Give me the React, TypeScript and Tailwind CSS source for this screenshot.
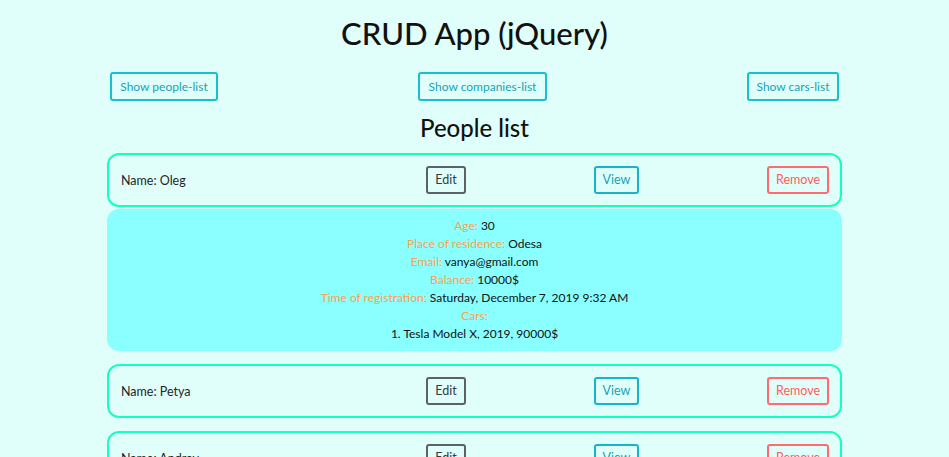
import { useState } from "react";

type Person = {
	id: number;
	name: string;
	age: number;
	city: string;
	email: string;
	balance: string;
	registered: string;
	cars: string[];
};

const people: Person[] = [
	{
		id: 1,
		name: "Oleg",
		age: 30,
		city: "Odesa",
		email: "vanya@gmail.com",
		balance: "10000$",
		registered: "Saturday, December 7, 2019 9:32 AM",
		cars: ["Tesla Model X, 2019, 90000$"],
	},
	{
		id: 2,
		name: "Petya",
		age: 25,
		city: "Kyiv",
		email: "petya@gmail.com",
		balance: "5000$",
		registered: "Sunday, December 8, 2019 10:15 AM",
		cars: [],
	},
	{
		id: 3,
		name: "Andrey",
		age: 41,
		city: "Lviv",
		email: "andrey@gmail.com",
		balance: "2000$",
		registered: "Monday, December 9, 2019 1:05 PM",
		cars: [],
	},
];

function Field({ label, children }: { label: string; children: React.ReactNode }) {
	return (
		<p className="leading-[18px]">
			<span className="text-[#ffa04d]">{label}:</span> {children}
		</p>
	);
}

function PersonRow({ person, open }: { person: Person; open: boolean }) {
	return (
		<div>
			<div className="h-[54px] border-2 border-[#14ffc0] rounded-[12px] flex items-center justify-between pl-[12px] pr-[11px] text-[12.5px]">
				<div className="w-[177px] pt-[2px] text-[#212529]">Name: {person.name}</div>
				<button className="h-[28px] w-[40px] pt-[1px] border-2 border-[#5a6268] rounded-[3px] text-[#343a40]">Edit</button>
				<button className="h-[28px] w-[45px] pt-[1px] border-2 border-[#17b3c8] rounded-[3px] text-[#17a2b8]">View</button>
				<button className="h-[28px] w-[62px] pt-[1px] border-2 border-[#ff6b70] rounded-[3px] text-[#ff5c5c]">Remove</button>
			</div>
			{open && (
				<div className="mt-[2px] bg-[#8affff] rounded-[12px] pt-[8px] pb-[8px] text-center text-[12px] text-[#111]">
					<Field label="Age">{person.age}</Field>
					<Field label="Place of residence">{person.city}</Field>
					<Field label="Email">{person.email}</Field>
					<Field label="Balance">{person.balance}</Field>
					<Field label="Time of registration">{person.registered}</Field>
					<p className="leading-[18px] text-[#ffa04d]">Cars:</p>
					{person.cars.map((car, i) => (
						<p key={car} className="leading-[18px]">
							{i + 1}. {car}
						</p>
					))}
				</div>
			)}
		</div>
	);
}

export default function App() {
	const [openId] = useState(1);
	return (
		<div className="min-h-screen bg-[#e0fffa] font-['Lato',sans-serif] text-[#111]">
			<div className="w-[735px] mx-auto">
				<h1 className="text-[31px] text-center pt-[12px] leading-[42px] font-medium">CRUD App (jQuery)</h1>
				<div className="mt-[18px] flex justify-between px-[3px] text-[12px]">
					<button className="h-[29px] w-[108px] pt-[1px] border-2 border-[#17bfd0] rounded-[3px] text-[#17a2b8]">Show people-list</button>
					<button className="h-[29px] w-[129px] pt-[1px] border-2 border-[#17bfd0] rounded-[3px] text-[#17a2b8]">Show companies-list</button>
					<button className="h-[29px] w-[92px] pt-[1px] border-2 border-[#17bfd0] rounded-[3px] text-[#17a2b8]">Show cars-list</button>
				</div>
				<h2 className="text-[24px] text-center mt-[12px] leading-[30px] font-medium">People list</h2>
				<div className="mt-[10px] flex flex-col gap-[13px]">
					{people.map((p) => (
						<PersonRow key={p.id} person={p} open={p.id === openId} />
					))}
				</div>
			</div>
		</div>
	);
}
